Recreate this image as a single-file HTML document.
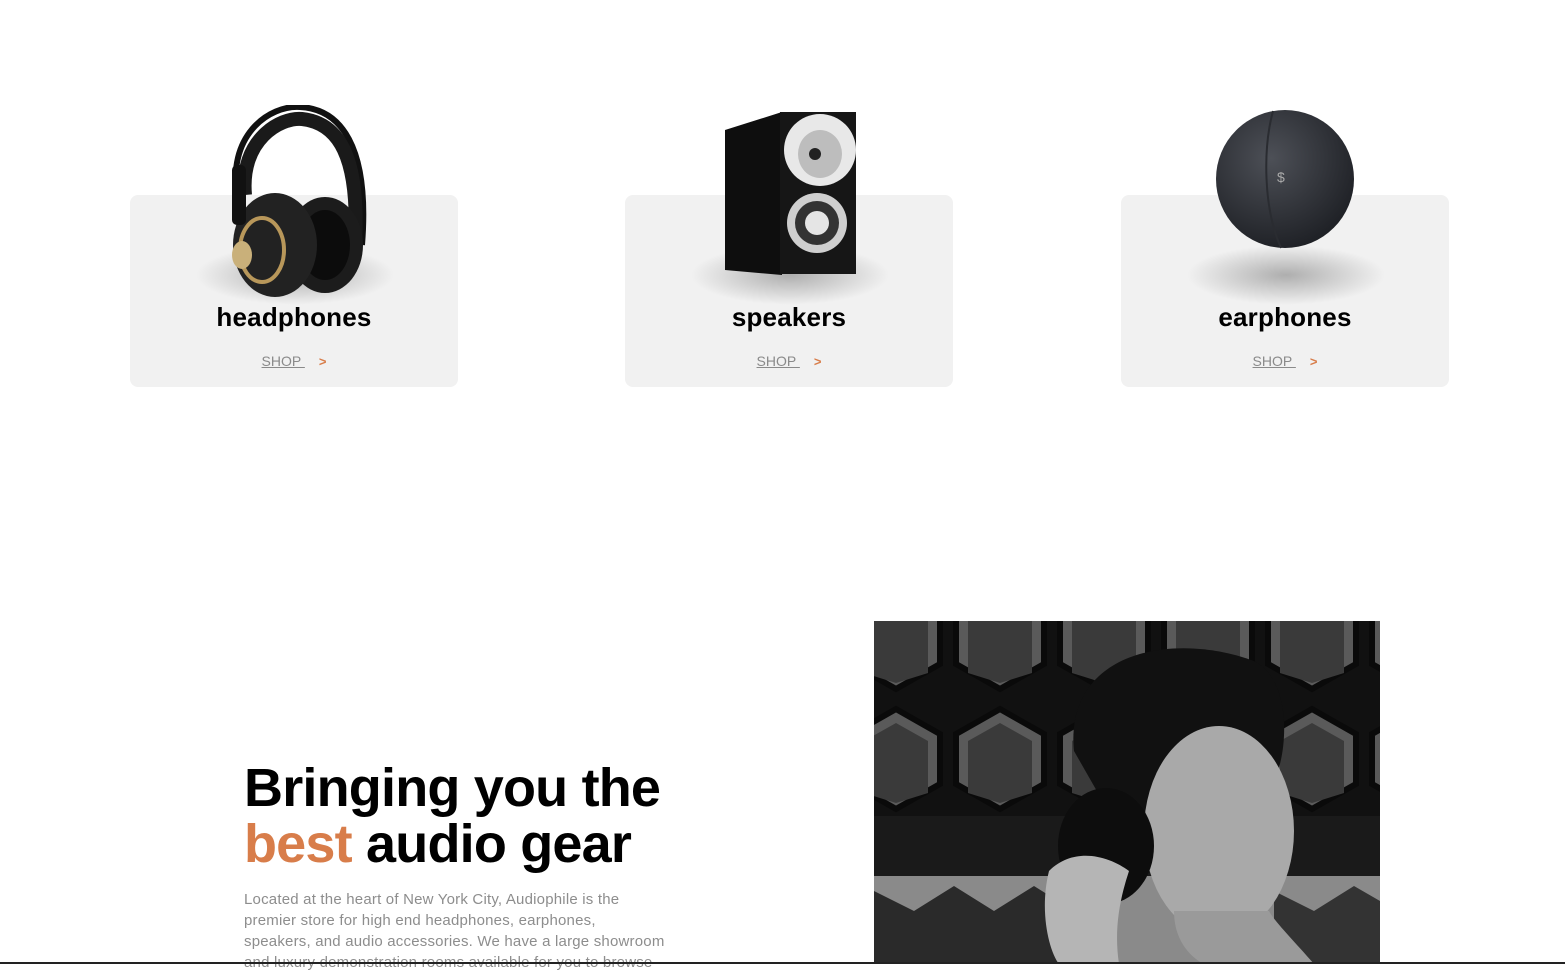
<!DOCTYPE html>
<html><head><meta charset="utf-8"><style>
*{margin:0;padding:0;box-sizing:border-box}
body{width:1565px;height:964px;overflow:hidden;background:#fff;font-family:"Liberation Sans",sans-serif;position:relative}
.card{position:absolute;top:195px;width:328px;height:192px;background:#f1f1f1;border-radius:8px}
.card h3{position:absolute;left:0;right:0;top:107px;text-align:center;font-size:26px;font-weight:700;color:#000;letter-spacing:.2px}
.shop{position:absolute;left:0;right:0;top:158px;text-align:center;font-size:14px;color:#8a8a8a}
.shop u{text-decoration:underline}
.shop b{color:#d87d4a;font-weight:700;margin-left:14px;font-size:13px}
.img{position:absolute}
.shadow{position:absolute;top:245px;width:200px;height:60px;border-radius:50%;background:radial-gradient(ellipse,rgba(0,0,0,.28),rgba(0,0,0,0) 70%)}
h1{position:absolute;left:244px;top:760px;font-size:54px;line-height:56px;font-weight:700;color:#000;letter-spacing:-.8px}
h1 span{color:#d87d4a}
p{position:absolute;left:244px;top:889px;width:436px;font-size:15px;line-height:21px;color:#8d8d8d;letter-spacing:.2px}
.line{position:absolute;left:0;top:962px;width:1565px;height:2px;background:#222}
</style></head><body>

<div class="card" style="left:130px"><h3>headphones</h3><div class="shop"><u>SHOP </u><b>&gt;</b></div></div>
<div class="card" style="left:625px"><h3>speakers</h3><div class="shop"><u>SHOP </u><b>&gt;</b></div></div>
<div class="card" style="left:1121px"><h3>earphones</h3><div class="shop"><u>SHOP </u><b>&gt;</b></div></div>

<div class="shadow" style="left:195px"></div>
<div class="shadow" style="left:690px"></div>
<div class="shadow" style="left:1186px"></div>

<svg class="img" style="left:220px;top:105px" width="150" height="195" viewBox="0 0 150 195">
<path d="M18 95 C5 30 50 0 80 2 C120 4 150 40 142 140" fill="none" stroke="#111" stroke-width="6"/>
<path d="M25 90 C20 35 60 12 82 14 C118 18 140 50 135 140" fill="none" stroke="#1a1a1a" stroke-width="14"/>
<ellipse cx="105" cy="140" rx="38" ry="48" fill="#1c1c1c"/>
<ellipse cx="105" cy="140" rx="25" ry="35" fill="#0c0c0c"/>
<ellipse cx="55" cy="140" rx="42" ry="52" fill="#222"/>
<ellipse cx="42" cy="145" rx="22" ry="32" fill="none" stroke="#b8975a" stroke-width="4"/>
<ellipse cx="22" cy="150" rx="10" ry="14" fill="#c9b07a"/>
<rect x="12" y="60" width="14" height="60" rx="5" fill="#111"/>
</svg>

<svg class="img" style="left:722px;top:110px" width="140" height="168" viewBox="0 0 140 168">
<polygon points="3,20 60,2 60,165 3,160" fill="#0e0e0e"/>
<rect x="58" y="2" width="76" height="162" fill="#161616"/>
<ellipse cx="98" cy="40" rx="36" ry="36" fill="#e8e8e8"/>
<ellipse cx="98" cy="44" rx="22" ry="24" fill="#bdbdbd"/>
<circle cx="93" cy="44" r="6" fill="#222"/>
<circle cx="95" cy="113" r="30" fill="#cfcfcf"/>
<circle cx="95" cy="113" r="22" fill="#333"/>
<circle cx="95" cy="113" r="12" fill="#e5e5e5"/>
</svg>

<svg class="img" style="left:1213px;top:108px" width="145" height="142" viewBox="0 0 145 142">
<defs><radialGradient id="g" cx=".4" cy=".35" r=".7"><stop offset="0" stop-color="#4d5057"/><stop offset="1" stop-color="#1d1f24"/></radialGradient></defs>
<circle cx="72" cy="71" r="69" fill="url(#g)"/>
<path d="M60 3 C50 40 50 100 68 140" fill="none" stroke="#2a2c31" stroke-width="2"/>
<text x="64" y="74" font-size="14" fill="#aaa" font-family="Liberation Sans">$</text>
</svg>

<h1>Bringing you the<br><span>best</span> audio gear</h1>
<p>Located at the heart of New York City, Audiophile is the<br>premier store for high end headphones, earphones,<br>speakers, and audio accessories. We have a large showroom<br>and luxury demonstration rooms available for you to browse</p>

<svg class="img" style="left:874px;top:621px" width="506" height="343" viewBox="0 0 506 343">
<defs><pattern id="hx" width="104" height="120" patternUnits="userSpaceOnUse" x="-30" y="-40">
<rect width="104" height="120" fill="#111"/>
<polygon points="52,8 96,33 96,83 52,108 8,83 8,33" fill="#5a5a5a" stroke="#0a0a0a" stroke-width="6"/>
<polygon points="52,22 84,40 84,92 52,102 20,92 20,40" fill="#3a3a3a"/>
</pattern></defs>
<rect width="506" height="200" fill="url(#hx)"/>
<rect y="195" width="506" height="60" fill="#1a1a1a"/>
<rect y="255" width="506" height="88" fill="#8a8a8a"/>
<polygon points="0,270 40,290 80,265 120,290 160,265 200,290 200,343 0,343" fill="#2a2a2a"/>
<polygon points="400,270 440,290 480,265 506,280 506,343 400,343" fill="#333"/>
<path d="M200 130 C190 30 300 10 380 40 C420 60 415 140 395 170 L240 200 Z" fill="#111"/>
<ellipse cx="345" cy="210" rx="75" ry="105" fill="#a9a9a9"/>
<path d="M300 290 C300 330 330 343 330 343 L440 343 C420 320 400 300 395 290 Z" fill="#9a9a9a"/>
<ellipse cx="232" cy="225" rx="48" ry="58" fill="#0d0d0d"/>
<path d="M175 250 C165 290 175 330 185 343 L245 343 C240 310 245 280 255 250 C235 235 200 225 175 250 Z" fill="#b5b5b5"/>
</svg>

<div class="line"></div>
</body></html>
